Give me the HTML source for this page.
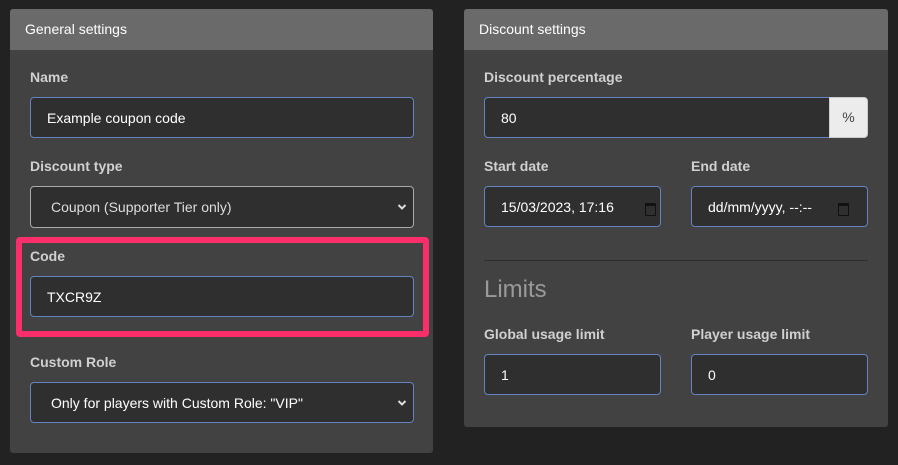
<!DOCTYPE html><html><head><style>
body{margin:0;width:898px;height:465px;background:#222;font-family:"Liberation Sans",sans-serif;position:relative;overflow:hidden}
.a{position:absolute;box-sizing:border-box}
.card{background:#424242;border-radius:3px;overflow:hidden}
.hd{background:#6a6a6a;color:#fff;font-size:14px;height:41px;line-height:40px;padding-left:15px;position:absolute;left:0;right:0;top:0}
.lb{color:#d0d0d0;font-weight:bold;font-size:14px}
.in{background:#2f2f2f;border:1px solid #6384c0;border-radius:4px;color:#fff;font-size:14px;padding-left:16px;display:flex;align-items:center}
.sel{padding-left:20px}
.chev{position:absolute;right:6px;top:50%;margin-top:-4px}
.cal{position:absolute;width:9px;height:9px;border:1.5px solid #111;border-top-width:3px;border-radius:1px}
</style></head><body>
<div class="a card" style="left:10px;top:9px;width:423px;height:444px"><div class="hd">General settings</div></div>
<div class="a card" style="left:464px;top:9px;width:424px;height:418px"><div class="hd">Discount settings</div></div>

<div class="a lb" style="left:30px;top:69px">Name</div>
<div class="a in" style="left:30px;top:97px;width:384px;height:41px">Example coupon code</div>
<div class="a lb" style="left:30px;top:158px">Discount type</div>
<div class="a in sel" style="left:30px;top:186px;width:384px;height:42px;border-color:#aaa;color:#ddd">Coupon (Supporter Tier only)<svg class="chev" width="10" height="8" viewBox="0 0 10 8"><path d="M1.5 2l3.5 3.5L8.5 2" stroke="#ddd" stroke-width="2" fill="none"/></svg></div>
<div class="a" style="left:16px;top:237px;width:413px;height:100px;border:6px solid #fb2e6c;border-radius:4px"></div>
<div class="a lb" style="left:30px;top:248px">Code</div>
<div class="a in" style="left:30px;top:276px;width:384px;height:41px">TXCR9Z</div>
<div class="a lb" style="left:30px;top:354px">Custom Role</div>
<div class="a in sel" style="left:30px;top:382px;width:384px;height:41px">Only for players with Custom Role: "VIP"<svg class="chev" width="10" height="8" viewBox="0 0 10 8"><path d="M1.5 2l3.5 3.5L8.5 2" stroke="#ddd" stroke-width="2" fill="none"/></svg></div>

<div class="a lb" style="left:484px;top:69px">Discount percentage</div>
<div class="a in" style="left:484px;top:97px;width:346px;height:41px;border-radius:4px 0 0 4px">80</div>
<div class="a" style="left:829px;top:97px;width:39px;height:41px;background:#ececec;border:1px solid #ccc;border-radius:0 4px 4px 0;color:#444;font-size:14px;text-align:center;line-height:39px">%</div>
<div class="a lb" style="left:484px;top:158px">Start date</div>
<div class="a in" style="left:484px;top:186px;width:177px;height:41px">15/03/2023, 17:16<div class="cal" style="right:4px;top:16px"></div></div>
<div class="a lb" style="left:691px;top:158px">End date</div>
<div class="a in" style="left:691px;top:186px;width:177px;height:41px">dd/mm/yyyy, --:--<div class="cal" style="right:18px;top:16px"></div></div>
<div class="a" style="left:484px;top:260px;width:384px;height:1px;background:#2c2c2c"></div>
<div class="a" style="left:484px;top:276px;color:#9a9a9a;font-size:24px">Limits</div>
<div class="a lb" style="left:484px;top:326px">Global usage limit</div>
<div class="a in" style="left:484px;top:354px;width:177px;height:41px">1</div>
<div class="a lb" style="left:691px;top:326px">Player usage limit</div>
<div class="a in" style="left:691px;top:354px;width:177px;height:41px">0</div>
</body></html>
